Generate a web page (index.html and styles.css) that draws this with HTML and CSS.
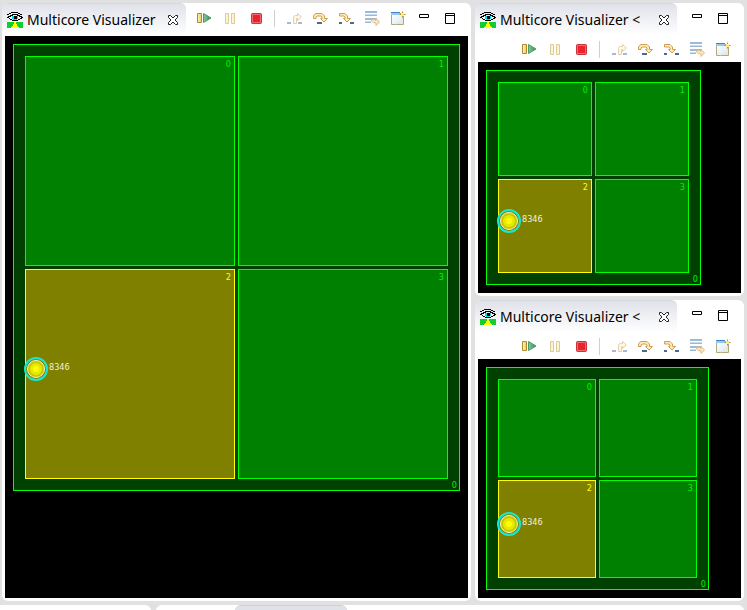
FILE: index.html
```html
<!DOCTYPE html>
<html lang="en">
<head>
<meta charset="utf-8">
<title>Multicore Visualizer</title>
<link rel="stylesheet" href="styles.css">
</head>
<body>
<svg class="sprite" aria-hidden="true">
  <defs>
    <linearGradient id="g-gold" x1="0" y1="0" x2="1" y2="0">
      <stop offset="0" stop-color="#fdf6c0"/><stop offset="1" stop-color="#e8c95a"/>
    </linearGradient>
    <linearGradient id="g-green" x1="0" y1="0" x2="1" y2="0">
      <stop offset="0" stop-color="#8cc8a4"/><stop offset="1" stop-color="#2f8a4c"/>
    </linearGradient>
    <linearGradient id="g-win" x1="0" y1="0" x2="1" y2="1">
      <stop offset="0" stop-color="#ffffff"/><stop offset="1" stop-color="#d4e8fa"/>
    </linearGradient>
    <symbol id="i-eye" viewBox="0 0 16 16">
      <g shape-rendering="crispEdges">
        <path fill="#1c3" d="M0 10h16v6H0z"/>
        <path fill="#ff0" d="M7 10h2v2h1v2h1v1h1v1H4v-1h1v-1h1v-2h1z"/>
        <path fill="#fff" d="M3 4h10v1h2v2h-2v1H4V7H2V5h1z"/>
        <path fill="#0de" d="M5 4h6v3h-1v1H6V7H5z"/>
        <path fill="#000" d="M4 0h7v1H4zM2 1h2v1H2zM11 1h2v1h-2zM0 2h2v1H0zM13 2h2v1h-2zM5 2h6v1H5zM3 3h3v1H3zM10 3h3v1h-3zM1 4h3v1H1zM12 4h3v1h-3zM0 5h2v1H0zM14 5h2v1h-2zM7 4h3v3H7zM2 6h1v1H2zM13 6h2v1h-2zM3 7h2v1H3zM11 7h2v1h-2zM5 8h6v1H5z"/>
      </g>
    </symbol>
    <symbol id="i-close" viewBox="0 0 12 12">
      <path fill="#fff" stroke="#222" d="M1.500 1.500h2L6 4l2.500-2.500h2v2L8 6l2.500 2.500v2h-2L6 8l-2.500 2.500h-2v-2L4 6 1.500 3.500z"/>
    </symbol>
    <symbol id="i-resume" viewBox="0 0 16 16">
      <path fill="url(#g-gold)" stroke="#b08a2c" d="M1.500 3.500h4v9h-4z"/>
      <path fill="url(#g-green)" stroke="#4c9a68" d="M7.500 3.500v9L15 8z"/>
    </symbol>
    <symbol id="i-pause" viewBox="0 0 16 16">
      <path fill="#fbf4d2" stroke="#dccb98" d="M3.500 3.500h3v10h-3zM9.500 3.500h3v10h-3z"/>
    </symbol>
    <symbol id="i-stop" viewBox="0 0 16 16">
      <rect x="3.500" y="3.500" width="10" height="10" rx="1" fill="#e8242c" stroke="#c8343a"/>
      <path fill="none" stroke="#f26a70" d="M4.500 12.500v-8h8v8z"/>
    </symbol>
    <symbol id="i-return" viewBox="0 0 16 16">
      <path fill="#a9b8cc" d="M1 12h4v2H1zM12 12h4v2h-4z"/>
      <path fill="#fff8e4" stroke="#e3cfae" d="M7.500 13.500v-6q0-2 2-2h2v-2l4 3.500-4 3.500v-2h-1v5z"/>
    </symbol>
    <symbol id="i-over" viewBox="0 0 16 16">
      <path fill="#4a6a90" d="M5 12h5v2H5z"/>
      <path fill="#fdebb8" stroke="#cf9f50" d="M1.500 8.500V6l2-2.500h6.500l2.500 2.500v2.500h3L12 12 8.500 8.500H10V7L9 6H5L4 7v1.500z"/>
    </symbol>
    <symbol id="i-into" viewBox="0 0 16 16">
      <path fill="#4a6a90" d="M1 12h3v2H1zM12 12h4v2h-4z"/>
      <path fill="#fdebb8" stroke="#cf9f50" d="M1.500 3.500H7l2.500 2.500v2.500h3L9 12 5.500 8.500H7V7L6 6H1.500z"/>
    </symbol>
    <symbol id="i-drop" viewBox="0 0 16 16">
      <path fill="#9dbad4" d="M1 1h12v2H1zM1 5h12v1H1zM1 8h12v2H1zM1 12h6v1H1z"/>
      <path fill="#c7d9e8" d="M1 4h12v1H1zM1 11h6v1H1z"/>
      <path fill="#fbe9c8" stroke="#e0b880" d="M7.500 9.500q3-1 4.500 1V8.500l3.500 3.500-3.500 3.500v-2.500q-3 0-4.500-2z"/>
    </symbol>
    <symbol id="i-new" viewBox="0 0 16 16">
      <path fill="url(#g-win)" stroke="#b5a878" d="M1.500 3.500h12v11h-12z"/>
      <path fill="#3f83c8" d="M1 2h9v1H1z"/>
      <path fill="#9cc8f0" d="M1 3h9v2H1z"/>
      <path fill="none" stroke="#f6e8ac" d="M12.500 8q0 5-7 6"/>
      <path fill="#fff3a8" stroke="#b98f28" d="M12.500 1.500v6M9.500 4.500h6"/>
      <path fill="#ffe98c" d="M11 3h3v3h-3z"/>
    </symbol>
    <symbol id="i-min" viewBox="0 0 16 16">
      <path fill="#fff" stroke="#000" d="M3.500 4.500h9v3h-9z"/>
    </symbol>
    <symbol id="i-max" viewBox="0 0 16 16">
      <path fill="#fff" stroke="#000" d="M3.500 3.500h9v10h-9zM3 5.500h10"/>
    </symbol>
    <symbol id="i-thread" viewBox="0 0 24 24">
      <circle cx="12" cy="12" r="11" fill="#808000" stroke="#18e8d0" stroke-width="2"/>
      <circle cx="12" cy="12" r="8.500" fill="#c8c800" stroke="#f4f4c8"/>
      <circle cx="12" cy="12" r="6" fill="#e8e800"/>
      <circle cx="12" cy="12" r="3" fill="#ff0"/>
    </symbol>
  </defs>
</svg>

<main class="workbench">
  <section class="view view-main">
    <header class="bar">
      <div class="tab">
        <svg class="icon"><use href="#i-eye"/></svg>
        <h2 class="title">Multicore Visualizer</h2>
        <button class="close" aria-label="Close"><svg><use href="#i-close"/></svg></button>
      </div>
      <div class="tools">
        <button aria-label="Resume"><svg class="icon"><use href="#i-resume"/></svg></button>
        <button aria-label="Suspend"><svg class="icon"><use href="#i-pause"/></svg></button>
        <button aria-label="Terminate"><svg class="icon"><use href="#i-stop"/></svg></button>
        <span class="separator"></span>
        <button aria-label="Step Return"><svg class="icon"><use href="#i-return"/></svg></button>
        <button aria-label="Step Over"><svg class="icon"><use href="#i-over"/></svg></button>
        <button aria-label="Step Into"><svg class="icon"><use href="#i-into"/></svg></button>
        <button aria-label="Drop To Frame"><svg class="icon"><use href="#i-drop"/></svg></button>
        <button aria-label="New View"><svg class="icon"><use href="#i-new"/></svg></button>
        <button aria-label="Minimize"><svg class="icon"><use href="#i-min"/></svg></button>
        <button aria-label="Maximize"><svg class="icon"><use href="#i-max"/></svg></button>
      </div>
    </header>
    <div class="canvas">
      <div class="chip">
        <div class="core"><span class="core-id">0</span></div>
        <div class="core"><span class="core-id">1</span></div>
        <div class="core busy"><span class="core-id">2</span><svg class="thread"><use href="#i-thread"/></svg><span class="pid">8346</span></div>
        <div class="core"><span class="core-id">3</span></div>
        <span class="chip-id">0</span>
      </div>
    </div>
  </section>

  <div class="side">
    <section class="view">
      <header class="bar">
        <div class="tab tab-wide">
          <svg class="icon"><use href="#i-eye"/></svg>
          <h2 class="title">Multicore Visualizer &lt;</h2>
          <button class="close" aria-label="Close"><svg><use href="#i-close"/></svg></button>
        </div>
        <div class="tools">
          <button aria-label="Minimize"><svg class="icon"><use href="#i-min"/></svg></button>
          <button aria-label="Maximize"><svg class="icon"><use href="#i-max"/></svg></button>
        </div>
      </header>
      <div class="tools tools-row">
        <button aria-label="Resume"><svg class="icon"><use href="#i-resume"/></svg></button>
        <button aria-label="Suspend"><svg class="icon"><use href="#i-pause"/></svg></button>
        <button aria-label="Terminate"><svg class="icon"><use href="#i-stop"/></svg></button>
        <span class="separator"></span>
        <button aria-label="Step Return"><svg class="icon"><use href="#i-return"/></svg></button>
        <button aria-label="Step Over"><svg class="icon"><use href="#i-over"/></svg></button>
        <button aria-label="Step Into"><svg class="icon"><use href="#i-into"/></svg></button>
        <button aria-label="Drop To Frame"><svg class="icon"><use href="#i-drop"/></svg></button>
        <button aria-label="New View"><svg class="icon"><use href="#i-new"/></svg></button>
      </div>
      <div class="canvas">
        <div class="chip">
          <div class="core"><span class="core-id">0</span></div>
          <div class="core"><span class="core-id">1</span></div>
          <div class="core busy"><span class="core-id">2</span><svg class="thread"><use href="#i-thread"/></svg><span class="pid">8346</span></div>
          <div class="core"><span class="core-id">3</span></div>
          <span class="chip-id">0</span>
        </div>
      </div>
    </section>

    <section class="view">
      <header class="bar">
        <div class="tab tab-wide">
          <svg class="icon"><use href="#i-eye"/></svg>
          <h2 class="title">Multicore Visualizer &lt;</h2>
          <button class="close" aria-label="Close"><svg><use href="#i-close"/></svg></button>
        </div>
        <div class="tools">
          <button aria-label="Minimize"><svg class="icon"><use href="#i-min"/></svg></button>
          <button aria-label="Maximize"><svg class="icon"><use href="#i-max"/></svg></button>
        </div>
      </header>
      <div class="tools tools-row">
        <button aria-label="Resume"><svg class="icon"><use href="#i-resume"/></svg></button>
        <button aria-label="Suspend"><svg class="icon"><use href="#i-pause"/></svg></button>
        <button aria-label="Terminate"><svg class="icon"><use href="#i-stop"/></svg></button>
        <span class="separator"></span>
        <button aria-label="Step Return"><svg class="icon"><use href="#i-return"/></svg></button>
        <button aria-label="Step Over"><svg class="icon"><use href="#i-over"/></svg></button>
        <button aria-label="Step Into"><svg class="icon"><use href="#i-into"/></svg></button>
        <button aria-label="Drop To Frame"><svg class="icon"><use href="#i-drop"/></svg></button>
        <button aria-label="New View"><svg class="icon"><use href="#i-new"/></svg></button>
      </div>
      <div class="canvas">
        <div class="chip">
          <div class="core"><span class="core-id">0</span></div>
          <div class="core"><span class="core-id">1</span></div>
          <div class="core busy"><span class="core-id">2</span><svg class="thread"><use href="#i-thread"/></svg><span class="pid">8346</span></div>
          <div class="core"><span class="core-id">3</span></div>
          <span class="chip-id">0</span>
        </div>
      </div>
    </section>
  </div>
</main>
<div class="lower">
  <div class="stub stub-left"></div>
  <div class="stub stub-right"><div class="stub-tab"></div></div>
</div>
</body>
</html>
```
FILE: styles.css
```css
* {
  box-sizing: border-box;
}

body {
  margin: 0;
  height: 100vh;
  overflow: hidden;
  display: grid;
  grid-template-rows: minmax(0, 1fr) 5px;
  gap: 4px;
  padding-top: 3px;
  background: #e1e1e1;
  font-family: "Noto Sans", "Open Sans", sans-serif;
}

.sprite {
  position: absolute;
  width: 0;
  height: 0;
}

.workbench {
  display: grid;
  grid-template-columns: 469fr 269fr;
  gap: 4px;
  padding: 0 3px 0 2px;
  min-height: 0;
}

.side {
  display: grid;
  grid-template-rows: 293fr 301fr;
  gap: 4px;
  min-height: 0;
}

.view {
  display: flex;
  flex-direction: column;
  min-width: 0;
  min-height: 0;
  background: #fff;
  border-radius: 6px;
}

.bar {
  display: flex;
  justify-content: space-between;
  height: 33px;
}

.tab {
  display: flex;
  align-items: center;
  width: 184px;
  height: 32px;
  padding: 0 7px 0 5px;
  border-top: 1px solid #d6d8e0;
  border-radius: 6px 6px 0 0;
  background: linear-gradient(#e0e2ea, #fff);
}

.tab-wide {
  width: 202px;
}

.title {
  flex: 1;
  margin: 0 0 0 4px;
  font-size: 14px;
  font-weight: 400;
  line-height: 20px;
  white-space: nowrap;
  color: #000;
}

.icon {
  display: block;
  width: 16px;
  height: 16px;
}

button {
  display: flex;
  align-items: center;
  justify-content: center;
  padding: 0;
  border: 0;
  background: none;
}

.close svg {
  display: block;
  width: 12px;
  height: 12px;
}

.tools {
  display: flex;
  align-items: center;
  justify-content: flex-end;
  height: 30px;
  padding-right: 8px;
}

.tools-row {
  height: 26px;
}

.tools button {
  width: 26px;
  height: 26px;
}

.separator {
  width: 12px;
  height: 17px;
  background: linear-gradient(#cfcfcf, #cfcfcf) 5px 0 / 1px 100% no-repeat;
}

.canvas {
  flex: 1;
  min-height: 0;
  margin: 0 3px 3px;
  padding: 8px;
  background: #000;
  container-type: size;
}

.chip {
  position: relative;
  display: grid;
  grid-template: 1fr 1fr / 1fr 1fr;
  gap: 3px;
  width: min(100cqw, 100cqh);
  height: min(100cqw, 100cqh);
  padding: 11px;
  border: 1px solid #0f0;
  background: #004000;
  color: #00f000;
  font: 9px/10px "DejaVu Sans Condensed", "DejaVu Sans", sans-serif;
}

.core {
  position: relative;
  display: flex;
  align-items: center;
  padding-bottom: 10px;
  border: 1px solid #0f0;
  background: #008000;
}

.busy {
  border-color: #ff0;
  background: #808000;
  color: #ff0;
}

.core-id {
  position: absolute;
  top: 2px;
  right: 3px;
}

.chip-id {
  position: absolute;
  right: 2px;
  bottom: 0;
}

.thread {
  flex: none;
  width: 24px;
  height: 24px;
  margin-left: -2px;
}

.pid {
  padding: 0 0 4px 1px;
  color: #f0f0d8;
}

.lower {
  display: grid;
  grid-template-columns: 151fr 588fr;
  gap: 5px;
  padding-right: 3px;
  overflow: hidden;
}

.stub {
  height: 20px;
  background: #fff;
}

.stub-left {
  border-radius: 0 6px 0 0;
}

.stub-right {
  border-radius: 6px 6px 0 0;
}

.stub-tab {
  width: 112px;
  height: 20px;
  margin-left: 79px;
  border-top: 1px solid #cfd0d8;
  border-radius: 6px 6px 0 0;
  background: #e0e2ea;
}
```
